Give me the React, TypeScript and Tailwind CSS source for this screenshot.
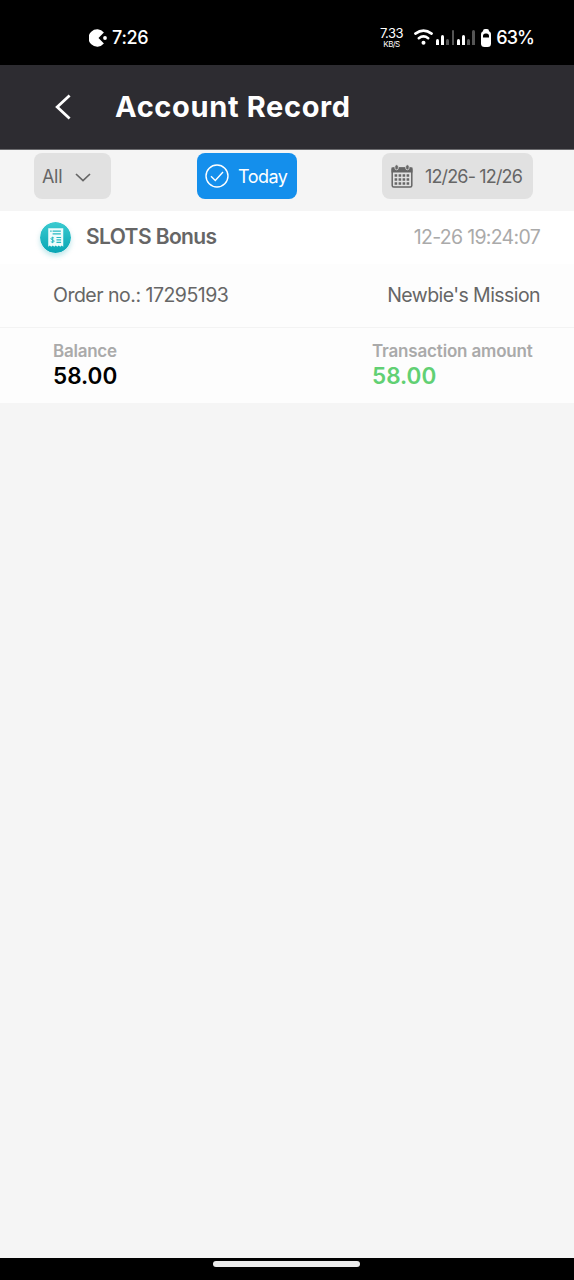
import type { ReactNode } from "react";
import clsx from "clsx";

const signalBars = [
  { h: 6, on: true },
  { h: 10, on: true },
  { h: 6, on: false },
  { h: 15, on: false },
  { h: 6, on: true },
  { h: 10, on: true },
  { h: 6, on: false },
  { h: 15, on: false },
];

const StatusBar = () => {
  return (
    <div className="flex h-[65px] shrink-0 items-center bg-black pt-[10px] pr-10 pl-[89px] text-[18px] font-medium text-white">
      <svg className="h-[18px] w-[19px]" viewBox="0 0 19 18" fill="white">
        <path d="M9.5 9 14.9 3.4A8.700 8.700 0 1 0 14.900 14.600Z" />
        <circle cx="16" cy="9" r="1.9" />
      </svg>
      <span className="ml-1 tracking-[-0.3px]">7:26</span>
      <div className="ml-auto flex items-center">
        <div className="flex flex-col items-center leading-none font-normal">
          <span className="text-[13px] tracking-[-0.5px]">7.33</span>
          <span className="text-[8px] tracking-[-0.6px]">KB/S</span>
        </div>
        <svg
          className="ml-[11px] h-[17px] w-[19px]"
          viewBox="0 0 19 17"
          fill="none"
          stroke="white"
          strokeLinecap="round"
        >
          <path d="M1.4 4.6Q9.5-1.4 17.6 4.6" strokeWidth="2.6" />
          <path d="M4.8 9.2Q9.5 5.6 14.2 9.2" strokeWidth="2.6" />
          <circle cx="9.5" cy="13.8" r="2" fill="white" stroke="none" />
        </svg>
        <div className="ml-[3px] flex h-[15px] items-end gap-[2.4px]">
          {signalBars.map((bar, i) => (
            <i
              key={i}
              style={{ height: bar.h }}
              className={clsx(
                "w-[2.8px] rounded-t-full",
                bar.on ? "bg-white" : "bg-[#555]",
              )}
            />
          ))}
        </div>
        <svg className="ml-[6px] h-[18px] w-[10px]" viewBox="0 0 10 18">
          <rect x="2" y="0" width="6" height="5" rx="2" fill="white" />
          <rect x="0" y="2" width="10" height="16" rx="3.5" fill="white" />
          <path d="M2 8.5V7a2.5 2.5 0 0 1 2.5-2.5h1A2.5 2.5 0 0 1 8 7v1.5Z" fill="black" />
        </svg>
        <span className="ml-[5px] tracking-[-0.9px]">63%</span>
      </div>
    </div>
  );
};

const Header = () => {
  return (
    <header className="flex h-[85px] shrink-0 items-center border-b border-[#6b6b6e] bg-[#2d2c31] pl-[55px] text-white">
      <svg
        className="h-[26px] w-[17px]"
        viewBox="0 0 17 26"
        fill="none"
        stroke="white"
        strokeWidth="2.8"
      >
        <path d="M14.6 1.5 2.2 13 14.6 24.5" />
      </svg>
      <h1 className="ml-[43px] text-[29px] font-bold tracking-[0.65px]">
        Account Record
      </h1>
    </header>
  );
};

const Chip = ({
  className,
  children,
}: {
  className: string;
  children: ReactNode;
}) => {
  return (
    <button
      className={clsx(
        "flex h-[46px] items-center rounded-lg text-[18px]",
        className,
      )}
    >
      {children}
    </button>
  );
};

const CalendarIcon = () => {
  return (
    <svg className="h-6 w-[22px]" viewBox="0 0 22 24" fill="none">
      <rect x="1.2" y="4" width="19.6" height="19" rx="1.5" stroke="#666" strokeWidth="1.5" />
      <path d="M.5 3.5h21v5H.5Z" fill="#666" />
      <rect x="3.9" y=".8" width="3.4" height="5" rx="1.7" fill="#666" stroke="#e1e1e1" strokeWidth=".8" />
      <rect x="14.7" y=".8" width="3.4" height="5" rx="1.7" fill="#666" stroke="#e1e1e1" strokeWidth=".8" />
      {[11.6, 15.6, 19.6].map((y) => (
        <path
          key={y}
          d={`M3.6 ${y}H18.4`}
          stroke="#666"
          strokeWidth="2.5"
          strokeDasharray="2.6 1.4"
        />
      ))}
    </svg>
  );
};

const Filters = () => {
  return (
    <div className="flex h-[61px] shrink-0 items-start bg-[#f5f5f5] pt-[3px] pl-[34px]">
      <Chip className="w-[77px] bg-[#e1e1e1] pl-2 text-[#666]">
        <span className="tracking-[-0.3px]">All</span>
        <svg
          className="mt-0.5 ml-[13px] h-[9px] w-4"
          viewBox="0 0 16 9"
          fill="none"
          stroke="#666"
          strokeWidth="1.7"
        >
          <path d="M1 1 8 7.5 15 1" />
        </svg>
      </Chip>
      <Chip className="ml-[86px] w-[100px] bg-[#148fec] pl-2 text-white">
        <svg
          className="size-6"
          viewBox="0 0 24 24"
          fill="none"
          stroke="white"
          strokeWidth="1.4"
        >
          <circle cx="12" cy="12" r="11" />
          <path d="M6 12.3 10.3 16.5 18 8" />
        </svg>
        <span className="ml-[9px] tracking-[-0.55px]">Today</span>
      </Chip>
      <Chip className="ml-[85px] w-[151px] bg-[#e1e1e1] pl-[9px] text-[#666]">
        <CalendarIcon />
        <span className="ml-3 tracking-[-0.85px] whitespace-nowrap">
          12/26- 12/26
        </span>
      </Chip>
    </div>
  );
};

const ReceiptIcon = () => {
  return (
    <svg
      className="-mt-px size-[31px] rounded-full shadow-[0_3px_5px_#00a0b040]"
      viewBox="0 0 32 32"
      fill="none"
    >
      <defs>
        <linearGradient id="teal" x1="0" y1="0" x2="0" y2="1">
          <stop stopColor="#3bcbd0" />
          <stop offset="1" stopColor="#08a5b4" />
        </linearGradient>
      </defs>
      <circle cx="16" cy="16" r="16" fill="url(#teal)" />
      <path
        d="M8.5 6.5H24v19l-1.6-1.3-1.5 1.3-1.5-1.3-1.6 1.3-1.5-1.3-1.6 1.3-1.5-1.3-1.6 1.3-1.5-1.3-1.6 1.3Z"
        fill="#effcfc"
      />
      <path
        d="M10.5 9.5H12M13 9.5h8.5M13 12.3h8.5M17 16h4.8M17 18.5h4.8M17 21h4.8"
        stroke="#27b9c2"
        strokeWidth="1.2"
      />
      <path
        d="M14.5 16.7c-.7-.9-3.2-.8-3.2.6 0 1.5 3.3.8 3.3 2.4 0 1.4-2.6 1.5-3.4.5M13 15.2v6.600"
        stroke="#27b9c2"
        strokeWidth="1"
      />
    </svg>
  );
};

const Record = () => {
  return (
    <section className="flex h-[192px] shrink-0 flex-col bg-[#fdfdfd] text-[#666]">
      <div className="flex h-[53px] items-center bg-white pr-[34px] pl-10">
        <ReceiptIcon />
        <h2 className="-mt-px ml-[15px] text-[21px] font-semibold tracking-[-0.6px]">
          SLOTS Bonus
        </h2>
        <span className="ml-auto text-[19.5px] tracking-[-0.7px] text-[#aaa]">
          12-26 19:24:07
        </span>
      </div>
      <div className="flex h-[64px] items-center justify-between border-b border-[#f3f3f3] pr-[34px] pl-[53px] text-[19.5px]">
        <span className="tracking-[-0.5px]">Order no.: 17295193</span>
        <span className="tracking-[-0.57px]">Newbie's Mission</span>
      </div>
      <div className="flex pt-[11px] pl-[53px] font-semibold">
        <div className="w-[319px]">
          <p className="text-[17px] leading-6 tracking-[-0.25px] text-[#aaa]">
            Balance
          </p>
          <p className="text-[22.5px] leading-[26px] text-black">58.00</p>
        </div>
        <div>
          <p className="text-[17px] leading-6 tracking-[-0.17px] text-[#aaa]">
            Transaction amount
          </p>
          <p className="text-[22.5px] leading-[26px] text-[#61d073]">58.00</p>
        </div>
      </div>
    </section>
  );
};

export default function App() {
  return (
    <main className="flex h-[1280px] w-[574px] flex-col overflow-hidden bg-[#f5f5f5] font-[Inter,sans-serif]">
      <StatusBar />
      <Header />
      <Filters />
      <Record />
      <div className="mt-auto flex h-[22px] justify-center bg-black pt-[3px] pr-px">
        <div className="h-[6px] w-[147px] rounded-full bg-[#ececec]" />
      </div>
    </main>
  );
}
